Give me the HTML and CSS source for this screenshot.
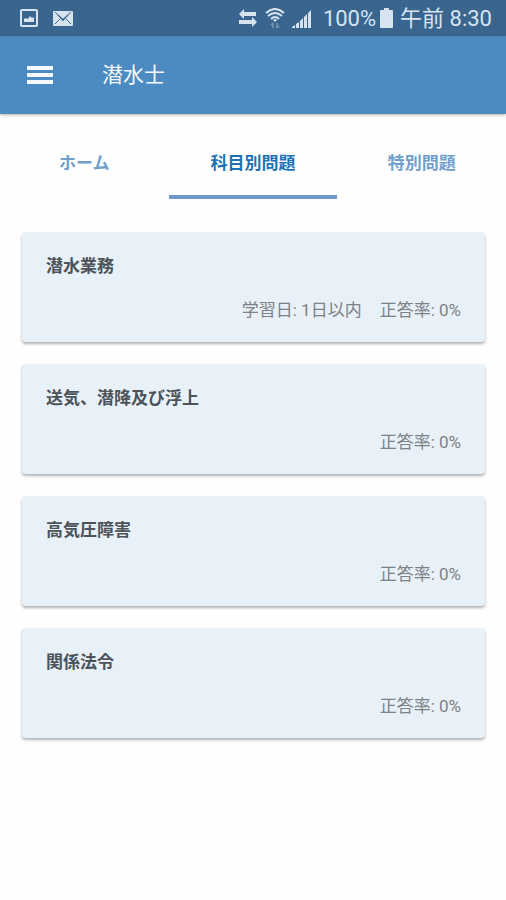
FILE: index.html
```html
<!DOCTYPE html>
<html lang="ja">
<head>
<meta charset="utf-8">
<meta name="viewport" content="width=device-width, initial-scale=1">
<title>潜水士</title>
<link rel="stylesheet" href="styles.css">
</head>
<body>
<div class="status-bar">
  <div class="status-group notifications">
    <svg width="18" height="18" viewBox="0 0 18 18" aria-hidden="true">
      <rect x="1" y="1" width="16" height="16" rx="1" fill="none" stroke="currentColor" stroke-width="2"/>
      <path d="M4 13V10L6 9L8 10L10 7L12 9L14 8V13Z" fill="currentColor"/>
    </svg>
    <svg width="20" height="15" viewBox="0 0 20 15" aria-hidden="true">
      <rect width="20" height="15" rx="1" fill="currentColor"/>
      <path d="M2 1L10 8L18 1L10 10Z" fill="#3a658f" stroke="#3a658f" stroke-width="0.6"/>
      <path d="M2 13L7 8M18 13L13 8" fill="none" stroke="#3a658f"/>
    </svg>
  </div>
  <div class="status-group system">
    <svg width="20" height="18" viewBox="0 0 20 18" aria-hidden="true">
      <path d="M1 5L6 0V3H18V7H6V10Z M19 13L14 8V11H1V15H14V18Z" fill="currentColor"/>
    </svg>
    <svg class="wifi" width="20" height="20" viewBox="0 0 20 20" aria-hidden="true">
      <path d="M1 5Q10 -3 19 5M3 8Q10 2 17 8M6 11Q10 7 14 11" fill="none" stroke="currentColor" stroke-width="2"/>
      <path d="M8 12Q10 10 12 12L10 14Z" fill="currentColor"/>
      <path d="M8 20V15M6 17L8 15M12 15V20M14 18L12 20" fill="none" stroke="#7898b5" stroke-width="1.5"/>
    </svg>
    <svg class="signal" width="20" height="19" viewBox="0 0 20 19" aria-hidden="true">
      <path d="M0 19V18L3 16V19ZM4 19V15L7 13V19ZM8 19V12L11 9V19ZM12 19V8L15 5V19ZM16 19V4L19 1V19Z" fill="currentColor"/>
    </svg>
    <span class="percent">100%</span>
    <svg class="battery" width="13" height="20" viewBox="0 0 13 20" aria-hidden="true">
      <path d="M4 0H9V2H12Q13 2 13 3V19Q13 20 12 20H1Q0 20 0 19V3Q0 2 1 2H4Z" fill="currentColor"/>
    </svg>
    <span>午前 8:30</span>
  </div>
</div>
<header class="app-bar">
  <button class="menu-button" type="button" aria-label="メニュー">
    <svg width="26" height="18" viewBox="0 0 26 18" aria-hidden="true">
      <path d="M0 0H26V4H0ZM0 7H26V11H0ZM0 14H26V18H0Z" fill="currentColor"/>
    </svg>
  </button>
  <h1 class="app-title">潜水士</h1>
</header>
<nav class="tabs">
  <a class="tab" href="#home">ホーム</a>
  <a class="tab tab-active" href="#subjects" aria-current="page">科目別問題</a>
  <a class="tab" href="#special">特別問題</a>
</nav>
<main class="cards" id="subjects">
  <a class="card" href="#diving">
    <h2 class="card-title">潜水業務</h2>
    <p class="card-meta"><span>学習日: 1日以内</span><span>正答率: 0%</span></p>
  </a>
  <a class="card" href="#air-supply">
    <h2 class="card-title">送気、潜降及び浮上</h2>
    <p class="card-meta"><span>正答率: 0%</span></p>
  </a>
  <a class="card" href="#pressure">
    <h2 class="card-title">高気圧障害</h2>
    <p class="card-meta"><span>正答率: 0%</span></p>
  </a>
  <a class="card" href="#law">
    <h2 class="card-title">関係法令</h2>
    <p class="card-meta"><span>正答率: 0%</span></p>
  </a>
</main>
</body>
</html>
```
FILE: styles.css
```css
* {
  box-sizing: border-box;
}

body {
  margin: 0;
  background: #fefefe;
  color: #4c5359;
  font-family: Roboto, "Noto Sans CJK JP", sans-serif;
  font-size: 17px;
  line-height: 24px;
}

a {
  color: inherit;
  text-decoration: none;
}

.status-bar {
  display: flex;
  align-items: center;
  justify-content: space-between;
  height: 36px;
  padding: 0 14px 0 20px;
  background: #3a658f;
  color: #d7e4f0;
  font-size: 22px;
  line-height: 26px;
  white-space: nowrap;
}

.status-group {
  display: flex;
  align-items: center;
}

.notifications {
  gap: 15px;
}

.system {
  gap: 7px;
}

.system span {
  padding-top: 2px;
}

.percent {
  margin: 0 -3px 0 4px;
}

.app-bar {
  display: flex;
  align-items: center;
  gap: 36px;
  height: 78px;
  padding: 0 14px;
  background: #4c8bc1;
  color: #f4f9fe;
  box-shadow: 0 1px 3px rgba(0, 0, 0, 0.3);
}

.menu-button {
  display: flex;
  align-items: center;
  justify-content: center;
  width: 52px;
  height: 52px;
  padding: 0;
  border: 0;
  background: none;
  color: inherit;
}

.app-title {
  margin: 0;
  font-size: 21px;
  font-weight: 400;
}

.tabs {
  display: grid;
  grid-template-columns: repeat(3, 1fr);
  margin-top: 12px;
}

.tab {
  padding: 25px 0 20px;
  border-bottom: 4px solid transparent;
  color: #6f9fca;
  font-weight: 700;
  text-align: center;
}

.tab-active {
  border-bottom-color: #6f99cb;
  color: #1c72b5;
}

.cards {
  display: grid;
  gap: 22px;
  padding: 33px 21px 33px 22px;
}

.card {
  display: grid;
  gap: 20px;
  padding: 22px 24px 20px;
  border-radius: 4px;
  background: #e8f0f8;
  box-shadow: 0 2px 3px rgba(0, 0, 0, 0.3);
}

.card-title {
  margin: 0;
  font-size: 17px;
  font-weight: 700;
}

.card-meta {
  display: flex;
  justify-content: flex-end;
  gap: 18px;
  margin: 0;
  color: #7d8286;
}
```
